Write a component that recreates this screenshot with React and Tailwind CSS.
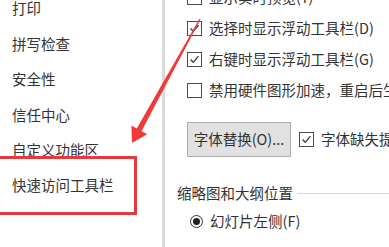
import React from "react";

const Check = ({ checked }) => (
  <div className="w-[15px] h-[15px] border border-[#4a4a4a] bg-white flex items-center justify-center shrink-0">
    {checked && (
      <svg width="11" height="11" viewBox="0 0 11 11">
        <path d="M1.5 5.5 L4.3 8.3 L9.5 2.2" fill="none" stroke="#3a3a3a" strokeWidth="1.3" />
      </svg>
    )}
  </div>
);

const CheckRow = ({ checked, label }) => (
  <div className="h-[31px] flex items-center gap-[7px] pl-[10px] whitespace-nowrap">
    <Check checked={checked} />
    <span>{label}</span>
  </div>
);

export default function App() {
  const items = ["打印", "拼写检查", "安全性", "信任中心", "自定义功能区", "快速访问工具栏"];
  return (
    <div className="relative w-[389px] h-[247px] overflow-hidden bg-white text-[#333] text-[14.5px] leading-none font-['Noto_Sans_CJK_SC',sans-serif]">
      <div className="flex h-full">
        <div className="w-[162px] shrink-0">
          <div className="-mt-[9px] pl-[12px]">
            {items.map((t) => (
              <div key={t} className="h-[35.4px] flex items-center whitespace-nowrap">
                {t}
              </div>
            ))}
          </div>
        </div>
        <div className="w-[3px] shrink-0 bg-[#d9d9d9]" />
        <div className="flex-1 pl-[12px] overflow-hidden">
          <div className="-mt-[18.5px]">
            <CheckRow checked={false} label="显示实时预览(Y)" />
            <CheckRow checked={true} label="选择时显示浮动工具栏(D)" />
            <CheckRow checked={true} label="右键时显示浮动工具栏(G)" />
            <CheckRow checked={false} label="禁用硬件图形加速，重启后生效(H)" />
          </div>
          <div className="mt-[16.5px] pl-[10px] flex items-center gap-[8px] whitespace-nowrap">
            <div className="w-[104px] h-[35px] shrink-0 bg-[#e1e1e1] border border-[#adadad] flex items-center justify-center">
              字体替换(O)...
            </div>
            <Check checked={true} />
            <span className="ml-[-1px]">字体缺失提示(M)</span>
          </div>
          <div className="mt-[26px] h-[20px] flex items-center gap-[4px] whitespace-nowrap">
            <span>缩略图和大纲位置</span>
            <div className="flex-1 h-px bg-[#d5d5d5]" />
          </div>
          <div className="mt-[8px] h-[20px] pl-[13px] flex items-center gap-[7px] whitespace-nowrap">
            <div className="w-[13px] h-[13px] rounded-full border border-[#333] flex items-center justify-center shrink-0">
              <div className="w-[7px] h-[7px] rounded-full bg-[#222]" />
            </div>
            <span>幻灯片左侧(F)</span>
          </div>
          <div className="mt-[16px] whitespace-nowrap text-[#666]">编辑选项</div>
        </div>
      </div>

      <div className="absolute left-[-6px] top-[156px] w-[143px] h-[59px] border-[3px] border-[#e5393e]" />

      <svg className="absolute left-0 top-0 pointer-events-none" width="389" height="247">
        <polygon
          points="200.6,19.3 141.6,131.1 147.2,134.2 132,143 131.4,125.4 136.8,128.5 199.4,18.7"
          fill="#f03a3a"
        />
      </svg>
    </div>
  );
}
